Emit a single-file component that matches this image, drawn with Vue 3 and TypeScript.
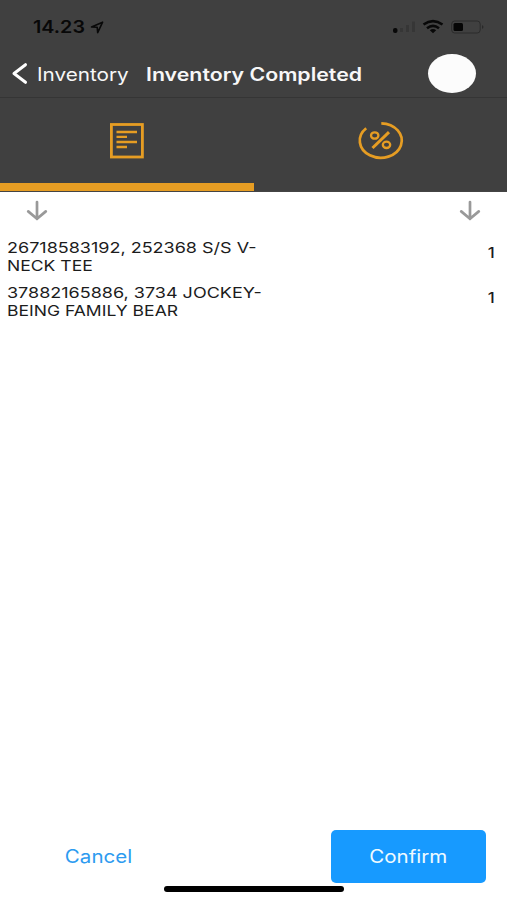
<script setup lang="ts">
interface Item {
  lines: string[]
  qty: number
}

const items: Item[] = [
  { lines: ['26718583192, 252368 S/S V-', 'NECK TEE'], qty: 1 },
  { lines: ['37882165886, 3734 JOCKEY-', 'BEING FAMILY BEAR'], qty: 1 },
]
</script>

<template>
  <main class="screen">
    <div class="status">
      <span class="wide time">14.23</span>
      <svg class="location" width="14" height="13" viewBox="0 0 14 13"><path d="M1.5 6 12.6 1.2 7.7 11.6 7.2 6.3Z" /></svg>
      <svg class="signal" width="27" height="14" viewBox="0 0 27 14">
        <rect x="0" y="8" width="4.5" height="5" rx="2" fill="#080808" />
        <path d="M8.5 8v4M14.5 5V12M20.5 1.5V12" stroke="#363636" stroke-width="3" />
      </svg>
      <svg class="wifi" width="22" height="14" viewBox="0 0 22 14">
        <path d="M1.5 4.5Q11-2.2 20.5 4.5M5 8.2Q11 3.5 17 8.2" />
        <path class="dot" d="M7.8 10.2Q11 7.8 14.2 10.2L11 13.3Z" />
      </svg>
      <svg class="battery" width="34" height="14" viewBox="0 0 34 14">
        <rect x=".7" y="1" width="28.5" height="12" rx="3" fill="none" stroke="#2b2b2b" />
        <rect x="2.5" y="3" width="9.5" height="8" rx="1.5" fill="#050505" />
        <path d="M31 5q3 2 0 4Z" fill="#292929" />
      </svg>
    </div>

    <header class="nav">
      <svg class="back" width="16" height="21" viewBox="0 0 16 21"><path d="M13.5 1.7 2 10.5 13.5 19.3" /></svg>
      <span class="wide back-label">Inventory</span>
      <h1 class="wide title">Inventory Completed</h1>
      <span class="avatar"></span>
    </header>

    <nav class="tabs">
      <div class="tab active">
        <svg width="34" height="36" viewBox="0 0 34 36">
          <rect x="1.4" y="1.5" width="31" height="32.5" />
          <path d="M6.5 9H27M6.5 13.8H17M6.5 19H27M6.5 24H17" stroke-width="2.3" />
        </svg>
      </div>
      <div class="tab">
        <svg width="46" height="38" viewBox="0 0 46 38">
          <path d="M8.2 6.2A21 17.2 0 1 0 23.3 1.4" stroke-width="2.7" />
          <ellipse cx="16.7" cy="13.5" rx="3.7" ry="3.2" stroke-width="2.3" />
          <ellipse cx="28.5" cy="22.8" rx="3.7" ry="3.2" stroke-width="2.3" />
          <path d="M31 10.2 14.5 26" stroke-width="3" />
        </svg>
      </div>
    </nav>

    <div class="sorts">
      <svg v-for="n in 2" :key="n" width="20" height="20" viewBox="0 0 20 20"><path d="M10 1V18M1.2 10.4 10 17.8 18.8 10.4" /></svg>
    </div>

    <section class="list">
      <div v-for="(item, i) in items" :key="i" class="row">
        <div class="name">
          <div v-for="line in item.lines" :key="line"><span class="wide">{{ line }}</span></div>
        </div>
        <span class="wide qty">{{ item.qty }}</span>
      </div>
    </section>

    <footer class="actions">
      <button class="cancel"><span class="wide">Cancel</span></button>
      <button class="confirm"><span class="wide">Confirm</span></button>
    </footer>
    <div class="home"></div>
  </main>
</template>

<style>
body { margin: 0; background: #fff; }
</style>

<style scoped>
* { box-sizing: border-box; }
.screen { display: flex; flex-direction: column; width: 507px; height: 900px; background: #fff; font-family: Inter, "Liberation Sans", sans-serif; overflow: hidden; }
svg { display: block; flex: none; fill: none; overflow: visible; }
.wide { display: inline-block; flex: none; white-space: nowrap; transform: scaleX(1.2); transform-origin: left center; }
.status { display: flex; align-items: center; height: 53px; padding: 1px 0 0 33px; background: #404040; }
.time { width: 57px; font-size: 17px; line-height: 20px; font-weight: 600; color: #080808; transform: scaleX(1.16); }
.location { stroke: #080808; stroke-width: 1.6; stroke-linejoin: round; }
.signal { margin-left: 289px; }
.wifi { margin-left: 2px; stroke: #080808; stroke-width: 2.6; }
.wifi .dot { fill: #080808; stroke: none; }
.battery { margin-left: 7px; }
.nav { display: flex; align-items: center; height: 45px; padding: 0 31px 3px 12px; background: #404040; border-bottom: 1px solid #353535; color: #f7f7f7; }
.back { stroke: #fff; stroke-width: 3; stroke-linecap: round; stroke-linejoin: round; }
.back-label { width: 109px; margin: 3px 0 0 9px; font-size: 18px; line-height: 22px; transform: scaleX(1.15); }
.title { margin: 3px 0 0; font-size: 18px; line-height: 22px; font-weight: 600; transform: scaleX(1.185); }
.avatar { width: 48px; height: 39px; margin-left: auto; border-radius: 50%; background: #fcfcfc; }
.tabs { display: flex; height: 94px; background: #404040; border-bottom: 1px solid #444; }
.tab { display: flex; flex: 1; justify-content: center; padding: 24px 0 0 1px; stroke: #e69d23; stroke-width: 2.8; }
.tab.active { padding-top: 25px; border-bottom: 8px solid #e69d23; }
.sorts { display: flex; justify-content: space-between; padding: 9px 27px 0; stroke: #999; stroke-width: 2.7; stroke-linecap: round; }
.list { padding-top: 18px; }
.row { display: flex; height: 45px; padding: 0 12px 0 7px; color: #1c1c1c; }
.name { flex: 1; font-size: 15px; line-height: 18px; }
.name div:last-child .wide { transform: scaleX(1.17); }
.qty { margin-top: 5px; font-size: 14px; line-height: 18px; font-weight: 500; transform-origin: right center; }
.actions { display: flex; justify-content: space-between; height: 53px; margin-top: auto; padding: 0 21px 0 44px; }
button { display: flex; align-items: center; justify-content: center; padding: 1px 0 0; border: 0; font: 18px/22px Inter, "Liberation Sans", sans-serif; }
button .wide { transform: scaleX(1.14); transform-origin: center; }
.cancel { width: 110px; background: none; color: #2d9bf0; }
.confirm { width: 155px; border-radius: 5px; background: #179aff; color: #effaff; }
.home { width: 180px; height: 6px; margin: 3px 0 8px 164px; border-radius: 3px; background: #000; }
</style>
